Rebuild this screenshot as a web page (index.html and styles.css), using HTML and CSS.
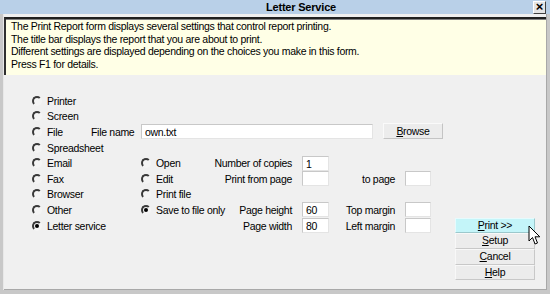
FILE: index.html
```html
<!DOCTYPE html>
<html lang="en">

<head>
    <meta charset="UTF-8">
    <title>Letter Service</title>
    <link rel="stylesheet" href="styles.css">
</head>

<body>

    <div class="window">
        <!-- Title bar -->
        <div class="titlebar">
            <span class="title">Letter Service</span>
            <span class="close">&#215;</span>
        </div>

        <!-- Help text -->
        <div class="info">
            <p>The Print Report form displays several settings that control report printing.</p>
            <p>The title bar displays the report that you are about to print.</p>
            <p>Different settings are displayed depending on the choices you make in this form.</p>
            <p>Press F1 for details.</p>
        </div>

        <!-- Print form -->
        <div class="form">
            <label class="opt r1"><span class="radio"></span>Printer</label>
            <label class="opt r2"><span class="radio"></span>Screen</label>

            <label class="opt r3"><span class="radio"></span>File</label>
            <span class="caption r3 c2">File name</span>
            <div class="filebox">
                <div class="field wide">own.txt</div>
                <div class="btn browse"><u>B</u>rowse</div>
            </div>

            <label class="opt r4"><span class="radio"></span>Spreadsheet</label>

            <label class="opt r5"><span class="radio"></span>Email</label>
            <label class="opt r5 c3"><span class="radio"></span>Open</label>
            <span class="caption right r5 c4">Number of copies</span>
            <div class="field r5 c5">1</div>

            <label class="opt r6"><span class="radio"></span>Fax</label>
            <label class="opt r6 c3"><span class="radio"></span>Edit</label>
            <span class="caption right r6 c4">Print from page</span>
            <div class="field r6 c5"></div>
            <span class="caption right r6 c6">to page</span>
            <div class="field r6 c7"></div>

            <label class="opt r7"><span class="radio"></span>Browser</label>
            <label class="opt r7 c3"><span class="radio"></span>Print file</label>

            <label class="opt r8"><span class="radio"></span>Other</label>
            <label class="opt r8 c3"><span class="radio checked"></span>Save to file only</label>
            <span class="caption right r8 c4">Page height</span>
            <div class="field r8 c5">60</div>
            <span class="caption right r8 c6">Top margin</span>
            <div class="field r8 c7"></div>

            <label class="opt r9"><span class="radio checked"></span>Letter service</label>
            <span class="caption right r9 c4">Page width</span>
            <div class="field r9 c5">80</div>
            <span class="caption right r9 c6">Left margin</span>
            <div class="field r9 c7"></div>

            <div class="actions">
                <div class="btn action primary"><u>P</u>rint &gt;&gt;</div>
                <div class="btn action"><u>S</u>etup</div>
                <div class="btn action"><u>C</u>ancel</div>
                <div class="btn action"><u>H</u>elp</div>
                <svg class="cursor" width="13" height="21" viewBox="0 0 13 21">
                    <path d="M1 1 L1 16 L4.5 12.5 L7 19 L9.5 18 L7 11.8 L11.8 11.8 Z" fill="#fff" stroke="#000" stroke-width="1" stroke-linejoin="miter"/>
                </svg>
            </div>
        </div>
    </div>

</body>

</html>
```

FILE: styles.css
```css
body {
    margin: 0;
    padding: 0;
    font-family: 'Liberation Sans', Arial, sans-serif;
    font-size: 10.5px;
    letter-spacing: -0.3px;
    color: #000000;
    background-color: #f0f0f0;
}

.window {
    width: 550px;
    height: 294px;
    box-sizing: border-box;
    background-color: #f0f0f0;
    border-left: 3px solid #c8c8c8;
    border-right: 3px solid #c8c8c8;
    border-bottom: 4px solid #c8c8c8;
    box-shadow: inset 1px 0 0 #e8e8e8, inset -1px 0 0 #a8a8a8, inset 0 -1px 0 #a8a8a8;
    position: relative;
}

.titlebar {
    height: 14px;
    margin: 0 -3px;
    background-color: #b9d0e8;
    display: flex;
    align-items: center;
    position: relative;
}

.title {
    padding-left: 266px;
    font-weight: bold;
    font-size: 11px;
    letter-spacing: -0.2px;
}

.close {
    position: absolute;
    right: 4px;
    top: 1px;
    width: 11px;
    height: 11px;
    line-height: 10px;
    text-align: center;
    font-size: 13px;
    font-weight: bold;
    letter-spacing: 0;
    background-color: #e4e4e4;
    border: 1px solid;
    border-color: #ffffff #404040 #404040 #ffffff;
}

.info {
    margin: 3px 1px 0 1px;
    height: 55px;
    padding: 1px 0 0 5px;
    background-color: #ffffe6;
    border-top: 2px solid #202020;
    border-left: 2px solid #303030;
    box-shadow: inset 0 1px 0 #808080;
}

.info p {
    margin: 0;
    line-height: 12.6px;
}

.form {
    display: grid;
    grid-template-columns: 59px 50px 74px 87px 27px 76px 26px 24px 80px;
    grid-template-rows: repeat(12, 15.6px);
    margin: 18px 0 0 29px;
    white-space: nowrap;
}

.opt {
    grid-column: 1;
    display: flex;
    align-items: center;
    gap: 5px;
}

.caption {
    display: flex;
    align-items: center;
}

.right {
    justify-content: flex-end;
    padding-right: 10px;
}

.r1 { grid-row: 1; }
.r2 { grid-row: 2; }
.r3 { grid-row: 3; }
.r4 { grid-row: 4; }
.r5 { grid-row: 5; }
.r6 { grid-row: 6; }
.r7 { grid-row: 7; }
.r8 { grid-row: 8; }
.r9 { grid-row: 9; }

.c2 { grid-column: 2; }
.c3 { grid-column: 3; }
.c4 { grid-column: 4; }
.c5 { grid-column: 5; }
.c6 { grid-column: 6; }
.c7 { grid-column: 7; }

.radio {
    width: 6px;
    height: 6px;
    border-radius: 50%;
    border: 2px solid;
    border-color: #3a3a3a #f4f4f4 #f4f4f4 #3a3a3a;
    background-color: #f4f4f4;
    position: relative;
    flex-shrink: 0;
}

.radio.checked::after {
    content: "";
    position: absolute;
    left: 1px;
    top: 1px;
    width: 4px;
    height: 4px;
    border-radius: 50%;
    background-color: #000000;
}

.field {
    align-self: center;
    height: 15px;
    box-sizing: border-box;
    padding: 1px 0 0 3px;
    line-height: 12px;
    background-color: #ffffff;
    border: 1px solid;
    border-color: #c8c8c8 #e4e4e4 #e4e4e4 #c8c8c8;
}

.filebox {
    grid-row: 3;
    grid-column: 3 / 10;
    display: flex;
    align-items: center;
    gap: 10px;
}

.field.wide {
    width: 232px;
}

.btn {
    box-sizing: border-box;
    text-align: center;
    background-color: #ececec;
    border: 1px solid;
    border-color: #fafafa #c4c4c4 #c4c4c4 #fafafa;
}

.browse {
    width: 60px;
    height: 16px;
    line-height: 14px;
    margin-top: -1px;
}

.actions {
    grid-column: 9;
    grid-row: 9 / span 4;
    display: flex;
    flex-direction: column;
    position: relative;
}

.action {
    height: 15.6px;
    line-height: 13px;
    border-color: #f8f8f8 #c8c8c8 #c8c8c8 #f8f8f8;
}

.action.primary {
    background-color: #c4f5f9;
    border-color: #e6fbfd #9cc8cc #9cc8cc #e6fbfd;
}

.cursor {
    position: absolute;
    left: 73px;
    top: 7px;
}
```
